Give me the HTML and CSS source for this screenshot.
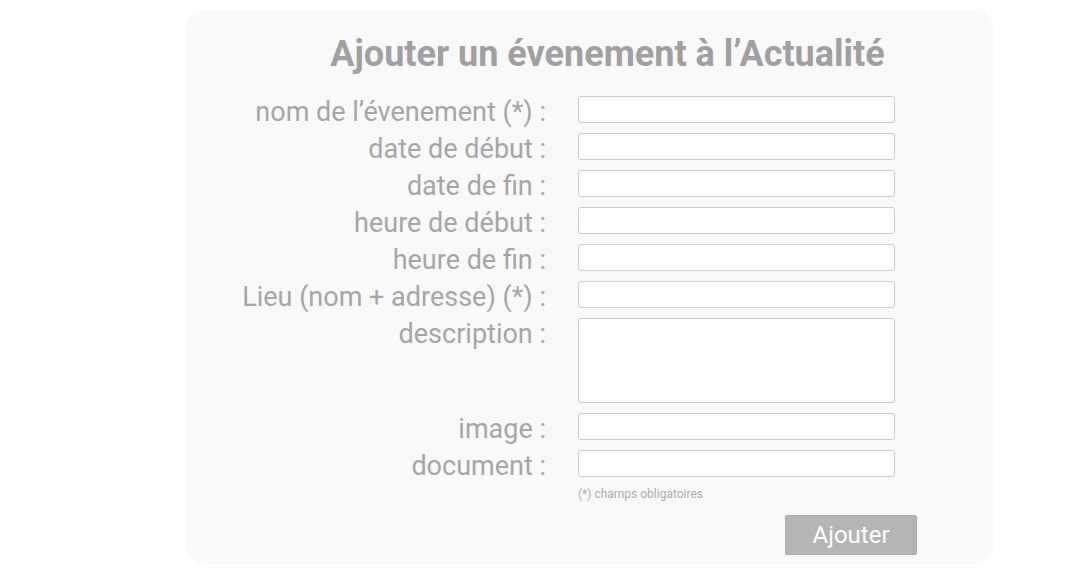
FILE: index.html
```html
<!DOCTYPE html>
<html lang="fr">
<head>
<meta charset="utf-8">
<title>Ajouter un évenement</title>
<link rel="stylesheet" href="styles.css">
</head>
<body>
<div class="card">
  <h1 class="title">Ajouter un évenement à l’Actualité</h1>
  <form class="form">
    <label class="lbl">nom de l’évenement (*) :</label><input class="field" type="text">
    <label class="lbl">date de début :</label><input class="field" type="text">
    <label class="lbl">date de fin :</label><input class="field" type="text">
    <label class="lbl">heure de début :</label><input class="field" type="text">
    <label class="lbl">heure de fin :</label><input class="field" type="text">
    <label class="lbl">Lieu (nom + adresse) (*) :</label><input class="field" type="text">
    <label class="lbl">description :</label><textarea class="field area"></textarea>
    <label class="lbl">image :</label><input class="field" type="text">
    <label class="lbl">document :</label><input class="field" type="text">
    <span></span><p class="note">(*) champs obligatoires</p>
  </form>
  <div class="actions"><button class="btn" type="button">Ajouter</button></div>
</div>
</body>
</html>
```
FILE: styles.css
```css
html, body { margin: 0; padding: 0; background: #fff; }
body { font-family: Roboto, "Liberation Sans", sans-serif; }
.card {
  margin: 10px 0 0 185px;
  width: 809px;
  height: 554px;
  box-sizing: border-box;
  background: #f9f9f9;
  border-radius: 20px;
  padding-top: 24px;
}
.title {
  margin: 0;
  padding-left: 36px;
  text-align: center;
  font-size: 36px;
  line-height: 40px;
  font-weight: 700;
  color: #a0a0a0;
}
.form {
  margin: 22px 0 0 0;
  display: grid;
  grid-template-columns: 361px 317px;
  column-gap: 32px;
  row-gap: 10px;
  align-items: start;
}
.lbl {
  text-align: right;
  font-size: 27px;
  line-height: 33px;
  height: 27px;
  color: #a6a6a6;
  white-space: nowrap;
}
.field {
  box-sizing: border-box;
  width: 317px;
  height: 27px;
  margin: 0;
  border: 1px solid #cccccc;
  border-radius: 3px;
  background: #fff;
  font: inherit;
  resize: none;
  display: block;
}
.area { height: 85px; }
.note {
  margin: 0;
  font-size: 12px;
  line-height: 14px;
  color: #ababab;
}
.actions {
  margin-top: 14px;
  padding-left: 600px;
}
.btn {
  width: 132px;
  height: 40px;
  background: #b5b5b5;
  border: 1px solid #a9a9a9;
  border-radius: 2px;
  color: #fff;
  font-family: Roboto, "Liberation Sans", sans-serif;
  font-size: 24px;
  padding: 0;
}
```
